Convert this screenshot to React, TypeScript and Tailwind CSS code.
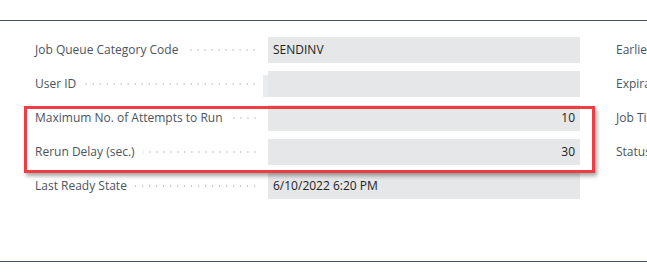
import React from 'react';

type Row = { label: string; value?: string; align?: 'left' | 'right'; notch?: boolean };

const rows: Row[] = [
    { label: 'Job Queue Category Code', value: 'SENDINV' },
    { label: 'User ID', value: '', notch: true },
    { label: 'Maximum No. of Attempts to Run', value: '10', align: 'right' },
    { label: 'Rerun Delay (sec.)', value: '30', align: 'right' },
    { label: 'Last Ready State', value: '6/10/2022 6:20 PM' },
];

const rightLabels = ['Earliest Start Date/Time', 'Expiration Date/Time', 'Job Timeout', 'Status'];

function Field({ row }: { row: Row }) {
    return (
        <div className="flex h-[26px] items-stretch">
            {/* caption + dotted leader */}
            <div className="flex w-[228px] items-center pr-[5px]">
                <span className="whitespace-nowrap text-[#4c535d]">{row.label}</span>
                <span className="ml-2 h-[4px] flex-1 bg-[radial-gradient(circle,#c2c2c2_1px,transparent_1.1px)] bg-[length:7px_4px] bg-right bg-repeat-x" />
            </div>
            {/* value box */}
            <div className="flex w-[317px] items-stretch">
                {row.notch ? (
                    <div className="mt-[4px] w-[5px] bg-[#eaebec]" />
                ) : (
                    <div className="w-[5px]" />
                )}
                <div
                    className={`flex flex-1 items-center bg-[#e6e7e9] text-[#222] ${row.align === 'right' ? 'justify-end pr-[5px]' : 'pl-[5px]'}`}
                >
                    {row.value}
                </div>
            </div>
        </div>
    );
}

export default function App() {
    return (
        <div className="relative h-[274px] w-[647px] overflow-hidden bg-white font-['Open_Sans',_'Noto_Sans',_sans-serif] text-[12px]">
            <div className="h-5" />
            <div className="border-t border-[#4a5461]" />

            <div className="flex h-[240px] pl-[35px] pt-4">
                <div className="flex flex-col gap-2">
                    {rows.map((r) => (
                        <Field key={r.label} row={r} />
                    ))}
                </div>
                <div className="ml-[36px] flex flex-col gap-2">
                    {rightLabels.map((l) => (
                        <div key={l} className="flex h-[26px] items-center whitespace-nowrap text-[#4c535d]">
                            {l}
                        </div>
                    ))}
                </div>
            </div>

            <div className="border-t border-[#4a5461]" />

            {/* annotation highlight */}
            <div className="absolute left-[24px] top-[106px] h-[67px] w-[571px] border-[3px] border-[#ef3e43] shadow-[2px_3px_4px_rgba(0,0,0,0.35)]" />
        </div>
    );
}
